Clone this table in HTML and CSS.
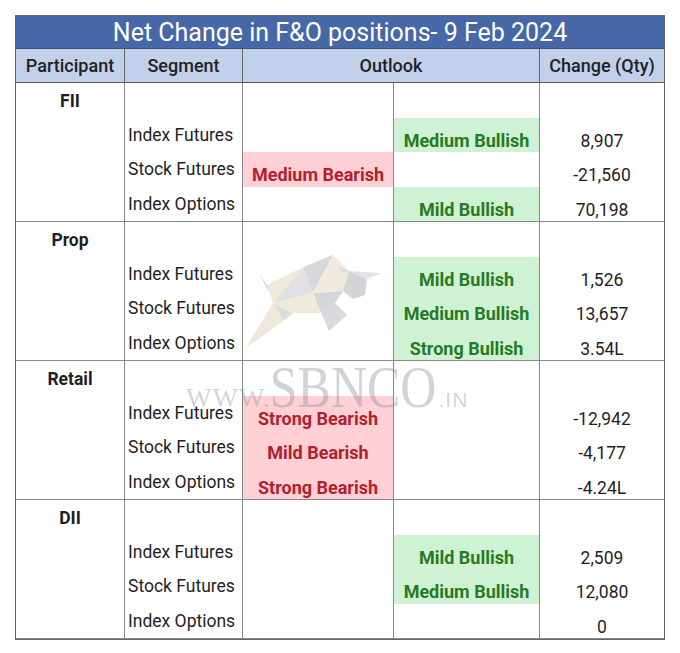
FILE: index.html
```html
<!DOCTYPE html>
<html>
<head>
<meta charset="utf-8">
<link rel="stylesheet" href="styles.css">
</head>
<body>
<div class="table">
  <div class="title">Net Change in F&amp;O positions- 9 Feb 2024</div>
  <div class="head">
    <div class="h">Participant</div>
    <div class="h">Segment</div>
    <div class="h">Outlook</div>
    <div class="h last">Change (Qty)</div>
  </div>

  <div class="sec">
    <div class="col part">FII</div>
    <div class="col seg"><div></div><div>Index Futures</div><div>Stock Futures</div><div>Index Options</div></div>
    <div class="col out"><div></div><div></div><div class="bear">Medium Bearish</div><div></div></div>
    <div class="col out"><div></div><div class="bull">Medium Bullish</div><div></div><div class="bull">Mild Bullish</div></div>
    <div class="col qty"><div></div><div>8,907</div><div>-21,560</div><div>70,198</div></div>
  </div>

  <div class="sec">
    <div class="col part">Prop</div>
    <div class="col seg"><div></div><div>Index Futures</div><div>Stock Futures</div><div>Index Options</div></div>
    <div class="col out"><div></div><div></div><div></div><div></div></div>
    <div class="col out"><div></div><div class="bull">Mild Bullish</div><div class="bull">Medium Bullish</div><div class="bull">Strong Bullish</div></div>
    <div class="col qty"><div></div><div>1,526</div><div>13,657</div><div>3.54L</div></div>
  </div>

  <div class="sec">
    <div class="col part">Retail</div>
    <div class="col seg"><div></div><div>Index Futures</div><div>Stock Futures</div><div>Index Options</div></div>
    <div class="col out"><div></div><div class="bear">Strong Bearish</div><div class="bear">Mild Bearish</div><div class="bear">Strong Bearish</div></div>
    <div class="col out"><div></div><div></div><div></div><div></div></div>
    <div class="col qty"><div></div><div>-12,942</div><div>-4,177</div><div>-4.24L</div></div>
  </div>

  <div class="sec">
    <div class="col part">DII</div>
    <div class="col seg"><div></div><div>Index Futures</div><div>Stock Futures</div><div>Index Options</div></div>
    <div class="col out"><div></div><div></div><div></div><div></div></div>
    <div class="col out"><div></div><div class="bull">Mild Bullish</div><div class="bull">Medium Bullish</div><div></div></div>
    <div class="col qty"><div></div><div>2,509</div><div>12,080</div><div>0</div></div>
  </div>

  <svg class="bull-logo" viewBox="0 0 140 100" width="140" height="100" aria-hidden="true">
    <polygon points="16,20 24,32 26,40" fill="#cfcfd3"/>
    <polygon points="24,32 60,14 30,50" fill="#efe6d6"/>
    <polygon points="60,14 90,2 70,40" fill="#d2d2d6"/>
    <polygon points="60,14 70,40 30,50" fill="#dcdce0"/>
    <polygon points="90,2 106,18 100,38 70,40" fill="#efe6d6"/>
    <polygon points="106,18 124,26 122,42 110,46 100,38" fill="#cdcdd1"/>
    <polygon points="106,18 138,20 124,26" fill="#dedee2"/>
    <polygon points="100,20 94,12 106,18" fill="#d6d6da"/>
    <polygon points="70,40 100,38 92,50 78,60" fill="#d0d0d4"/>
    <polygon points="30,50 70,40 78,60 50,60" fill="#efe6d6"/>
    <polygon points="92,50 104,62 86,78 78,60" fill="#d4d4d8"/>
    <polygon points="30,50 50,60 40,68" fill="#d8d8dc"/>
    <polygon points="30,50 40,68 3,95" fill="#eee4d4"/>
  </svg>
  <div class="wm-text"><span class="www">WWW.</span><span class="brand">SBNCO</span><span class="dotin">.IN</span></div>
</div>
</body>
</html>
```

FILE: styles.css
```css
* { box-sizing: border-box; }
html, body { margin: 0; padding: 0; background: #ffffff; }
body {
  padding: 15px;
  font-family: Roboto, "Liberation Sans", sans-serif;
  color: #1f1f1f;
}
.table {
  position: relative;
  width: 650px;
  border: 1px solid #666;
}
.title {
  height: 33px;
  background: #4668a8;
  color: #ffffff;
  font-size: 25px;
  line-height: 34px;
  text-align: center;
  border-bottom: 1px solid #3d4f73;
}
.head {
  display: grid;
  grid-template-columns: 109px 118px 297px 124px;
  height: 34px;
  background: #c3d0ec;
  border-bottom: 1px solid #555;
}
.h {
  border-right: 1px solid #666;
  font-size: 18px;
  font-weight: 500;
  line-height: 34px;
  text-align: center;
  color: #222;
}
.h.last { border-right: none; }
.sec {
  display: grid;
  grid-template-columns: 109px 118px 151px 146px 124px;
  height: 139px;
  border-bottom: 1px solid #888;
}
.sec:last-of-type { border-bottom: none; height: 138px; }
.col {
  display: grid;
  grid-template-rows: repeat(4, 1fr);
  border-right: 1px solid #888;
  font-size: 17.5px;
  line-height: 20px;
}
.col.qty { border-right: none; }
.part {
  display: block;
  text-align: center;
  font-weight: 700;
  font-size: 17.5px;
  padding-top: 8px;
}
.seg > div {
  padding-left: 3px;
  padding-top: 7px;
  white-space: nowrap;
}
.out > div, .qty > div {
  text-align: center;
  padding-top: 13px;
  white-space: nowrap;
}
.out > div { font-weight: 700; font-size: 18px; }
.bear { background: #ffd1d6; color: #b3202d; }
.bull { background: #cff2d4; color: #287a24; }
.bull-logo {
  position: absolute;
  left: 227px;
  top: 237px;
  opacity: 0.85;
  pointer-events: none;
}
.wm-text {
  position: absolute;
  left: 170px;
  top: 349px;
  display: flex;
  align-items: baseline;
  line-height: 1;
  color: rgba(140, 140, 140, 0.38);
  pointer-events: none;
  white-space: nowrap;
}
.www {
  font-family: "Liberation Serif", serif;
  font-size: 27px;
  letter-spacing: 1px;
}
.brand {
  display: inline-block;
  font-family: "Liberation Serif", serif;
  font-size: 50px;
  transform: scaleY(1.18);
  transform-origin: 50% 80%;
  margin-left: -1px;
}
.dotin {
  font-family: "Liberation Sans", sans-serif;
  font-size: 21px;
  margin-left: 2px;
  letter-spacing: 1px;
}
```
